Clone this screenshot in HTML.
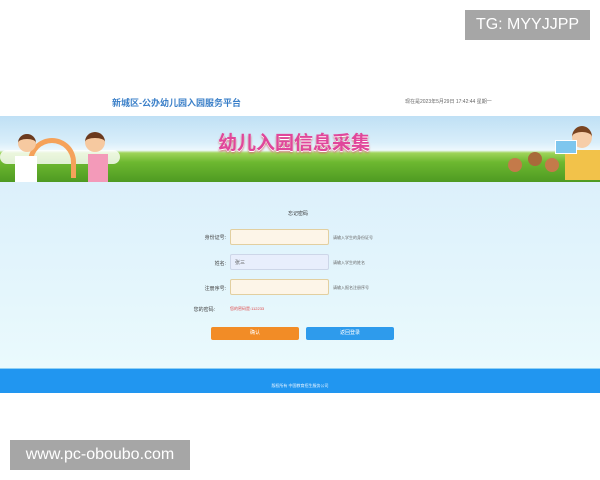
<!DOCTYPE html>
<html><head><meta charset="utf-8"><style>
*{margin:0;padding:0;box-sizing:border-box}
body{width:600px;height:480px;position:relative;background:#fff;font-family:"Liberation Sans","Noto Sans CJK SC",sans-serif;overflow:hidden}
.abs{position:absolute}
.hdr{left:112px;top:96px;font-size:9px;font-weight:bold;color:#3a7fc8}
.date{left:405px;top:98px;font-size:5px;color:#666}
.banner{left:0;top:116px;width:600px;height:66px;background:linear-gradient(#bfe0f5 0%,#d9eefa 40%,#eef8fd 52%,#9fd45a 56%,#6db830 70%,#4e9a22 100%);overflow:hidden}
.title{left:218px;top:128px;font-size:19px;font-weight:bold;color:#e0479b;text-shadow:0 1px 0 #fff,0 2px 2px #c66}
.form{left:0;top:182px;width:600px;height:186px;background:linear-gradient(#dcf0fb,#eafafd)}
.lab{font-size:5px;color:#444;text-align:right;width:60px}
.inp{width:99px;height:16px;border:1px solid #e2cfa0;border-radius:2px;background:#fdf5e8}
.hint{font-size:4px;color:#666}
.btn{height:13px;border-radius:2px;font-size:5px;color:#fff;text-align:center;line-height:13px}
.foot{left:0;top:368px;width:600px;height:25px;background:#2196f0;border-top:1px solid #8fd0f5;color:#e8f4ff;font-size:4px;text-align:center;line-height:34px}
.wm{background:#a6a6a6;color:#fff;font-size:16px;text-align:center}
</style></head><body>
<div class="abs hdr">新城区-公办幼儿园入园服务平台</div>
<div class="abs date">现在是2023年5月29日 17:42:44 星期一</div>
<div class="abs banner">
 <div class="abs" style="left:0;top:34px;width:120px;height:14px;background:#fff;opacity:.8;border-radius:7px"></div>
 <div class="abs" style="left:28px;top:22px;width:48px;height:40px;border-radius:24px 24px 0 0;border:5px solid #f5a25a;border-bottom:none"></div>
 <div class="abs" style="left:18px;top:18px;width:18px;height:18px;border-radius:50%;background:#f6c9a0;border-top:5px solid #6b3a1e"></div>
 <div class="abs" style="left:15px;top:40px;width:22px;height:26px;background:#fff"></div>
 <div class="abs" style="left:85px;top:16px;width:20px;height:20px;border-radius:50%;background:#f6c9a0;border-top:6px solid #6b3a1e"></div>
 <div class="abs" style="left:88px;top:38px;width:20px;height:28px;background:#f39ab9"></div>
 <div class="abs" style="left:572px;top:10px;width:20px;height:22px;border-radius:50%;background:#f6cda8;border-top:6px solid #7a4420"></div>
 <div class="abs" style="left:565px;top:34px;width:35px;height:30px;background:#f2c24a"></div>
 <div class="abs" style="left:555px;top:24px;width:22px;height:14px;background:#7ec6ee;border:1px solid #fff"></div>
 <div class="abs" style="left:508px;top:42px;width:14px;height:14px;border-radius:50%;background:#c47a4a"></div>
 <div class="abs" style="left:528px;top:36px;width:14px;height:14px;border-radius:50%;background:#a86a3a"></div>
 <div class="abs" style="left:545px;top:42px;width:14px;height:14px;border-radius:50%;background:#c47a4a"></div>
</div>
<div class="abs title">幼儿入园信息采集</div>
<div class="abs form"></div>
<div class="abs" style="left:288px;top:210px;font-size:5px;color:#333">忘记密码</div>
<div class="abs lab" style="left:166px;top:234px">身份证号:</div>
<div class="abs inp" style="left:230px;top:229px"></div>
<div class="abs hint" style="left:333px;top:235px">请输入学生的身份证号</div>
<div class="abs lab" style="left:166px;top:260px">姓名:</div>
<div class="abs inp" style="left:230px;top:254px;background:#e8eefc;border-color:#cdd6e8"></div>
<div class="abs" style="left:235px;top:259px;font-size:5px;color:#555">张三</div>
<div class="abs hint" style="left:333px;top:260px">请输入学生的姓名</div>
<div class="abs lab" style="left:166px;top:285px">注册序号:</div>
<div class="abs inp" style="left:230px;top:279px"></div>
<div class="abs hint" style="left:333px;top:285px">请输入报名注册序号</div>
<div class="abs lab" style="left:155px;top:306px">您的密码:</div>
<div class="abs" style="left:230px;top:306px;font-size:4px;color:#e04848">您的密码是:112233</div>
<div class="abs btn" style="left:211px;top:327px;width:88px;background:#f28c26">确认</div>
<div class="abs btn" style="left:306px;top:327px;width:88px;background:#2e9bec">返回登录</div>
<div class="abs foot">版权所有 中国教育招生服务公司</div>
<div class="abs wm" style="left:465px;top:10px;width:125px;height:30px;line-height:30px">TG: MYYJJPP</div>
<div class="abs wm" style="left:10px;top:440px;width:180px;height:30px;line-height:30px">www.pc-oboubo.com</div>
</body></html>
